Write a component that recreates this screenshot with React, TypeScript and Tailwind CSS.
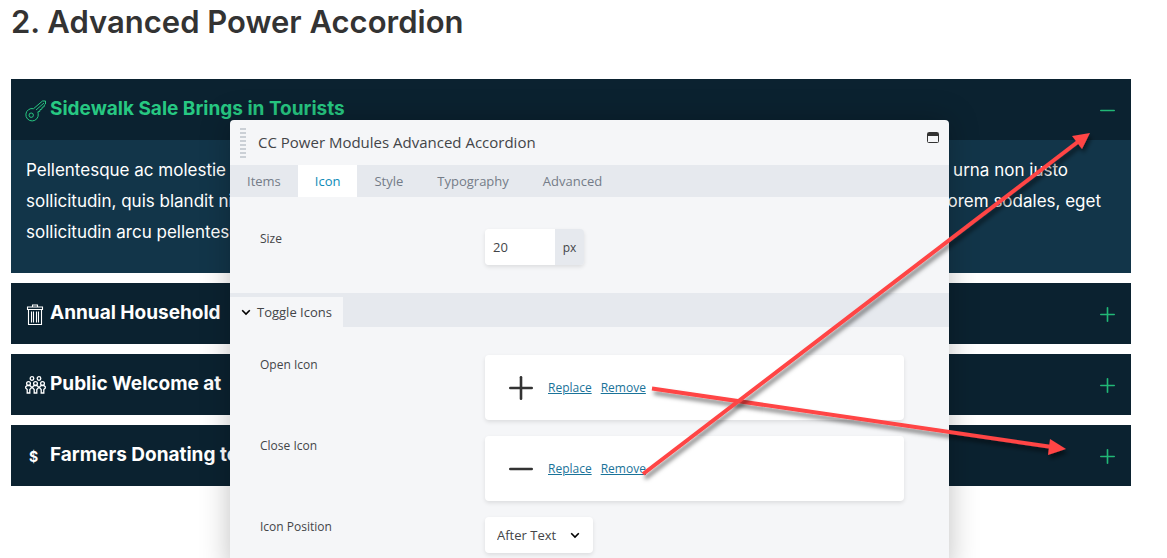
import React from 'react';

type IconProps = { className?: string };

function KeyIcon({ className }: IconProps) {
  return (
    <svg className={className} width="22" height="22" viewBox="0 0 22 22" fill="none" stroke="currentColor" strokeWidth="1" strokeLinejoin="round" aria-hidden="true">
      <path d="M8.500 8.700 17.500 1h3v3l-1.200 1-.2 1.800-1.900.4-.3 1.900-1.900.5-.2 1.800-1.900.4.3 2A6.200 6.200 0 1 1 8.500 8.700Z" />
      <circle cx="6.200" cy="15.200" r="2.200" />
      <path d="m11 10 8-7" />
    </svg>
  );
}

function TrashIcon({ className }: IconProps) {
  return (
    <svg className={className} width="22" height="22" viewBox="0 0 22 22" fill="none" stroke="currentColor" strokeWidth="1.100" aria-hidden="true">
      <path d="M7.500 2.500V1h5v1.500M2.500 5.500V3h15v2.500zM3.500 5.500v15h13v-15M6.500 7.500v11M8.500 7.500v11M11.500 7.500v11M13.500 7.500v11" />
    </svg>
  );
}

function CrowdIcon({ className }: IconProps) {
  return (
    <svg className={className} width="22" height="22" viewBox="0 0 22 22" fill="none" stroke="currentColor" strokeWidth="1.300" aria-hidden="true">
      <circle cx="7" cy="3.500" r="1.800" />
      <circle cx="14" cy="3.500" r="1.800" />
      <circle cx="3.500" cy="8.500" r="1.900" />
      <circle cx="10.500" cy="8.500" r="1.900" />
      <circle cx="17.500" cy="8.500" r="1.900" />
      <path d="M2.200 18v-3.500L.7 13v-1.200l1.500-1.300h2.600l1.500 1.300V13l-1.500 1.500V18zM9.200 18v-3.500L7.700 13v-1.200l1.500-1.300h2.600l1.500 1.300V13l-1.500 1.500V18zM16.200 18v-3.500L14.700 13v-1.200l1.500-1.300h2.600l1.500 1.300V13l-1.500 1.500V18z" />
    </svg>
  );
}

function ToggleGlyph({ open, className, size }: { open: boolean; className: string; size: number }) {
  return (
    <svg className={className} width={size} height={size} viewBox="0 0 24 24" fill="none" stroke="currentColor" strokeWidth="2.600" strokeLinecap="round" aria-hidden="true">
      <path d="M1.300 12h21.400" />
      {!open && <path d="M12 1.300v21.400" />}
    </svg>
  );
}

function Chevron({ className }: IconProps) {
  return (
    <svg className={className} width="10" height="7" viewBox="0 0 10 7" fill="none" stroke="currentColor" strokeWidth="1.600" aria-hidden="true">
      <path d="m1.200 1.200 3.800 3.800 3.800-3.800" />
    </svg>
  );
}

function ItemHeader({ title, icon, open = false }: { title: string; icon: React.ReactNode; open?: boolean }) {
  return (
    <button
      type="button"
      aria-expanded={open}
      className={`flex h-[61px] w-full items-center bg-[#0b2230] pb-px pl-[14px] pr-4 text-left font-[Inter,sans-serif] text-[19px] font-bold ${open ? 'text-[#27c882]' : 'text-white'}`}
    >
      <span className="mt-1 w-[25px] shrink-0">{icon}</span>
      <span className="grow truncate">{title}</span>
      <ToggleGlyph open={open} size={15} className="mt-[2px] text-[#21b876]" />
    </button>
  );
}

function IconField({ label, open }: { label: string; open: boolean }) {
  return (
    <div className="mb-4 flex" role="group" aria-label={label}>
      <span className="w-[225px] shrink-0 text-xs leading-5">{label}</span>
      <div className="flex h-[65px] grow items-center rounded bg-white pl-6 shadow-[0_2px_4px_rgba(0,0,0,0.1)]">
        <ToggleGlyph open={open} size={24} className="mr-[15px] text-[#333]" />
        <a href="#replace" className="mr-[9px] text-xs text-[#1a7399] underline">Replace</a>
        <a href="#remove" className="text-xs text-[#1a7399] underline">Remove</a>
      </div>
    </div>
  );
}

const tabs = ['Items', 'Icon', 'Style', 'Typography', 'Advanced'];

function SettingsPanel() {
  return (
    <section className="absolute left-[230px] top-[120px] w-[719px] rounded-t bg-[#f5f6f8] pb-5 font-['Open_Sans',sans-serif] text-[#434548] shadow-[0_0_30px_rgba(0,0,0,0.25)]">
      <header className="flex h-[45px] items-center pl-[10px] pr-[10px]">
        <div className="mr-3 flex flex-col gap-[2px]">
          {[0, 1, 2, 3, 4, 5, 6, 7].map((n) => (
            <span key={n} className="h-[2px] w-[6px] bg-[#cbd0d6]" />
          ))}
        </div>
        <h2 className="grow text-[15px]">CC Power Modules Advanced Accordion</h2>
        <button type="button" aria-label="Expand window" className="mb-[10px] text-[#333]">
          <svg width="12" height="11" viewBox="0 0 12 11" fill="none" aria-hidden="true">
            <rect x=".5" y=".5" width="11" height="10" rx="1" stroke="currentColor" />
            <path d="M1 1h10v3H1z" fill="currentColor" />
          </svg>
        </button>
      </header>
      <nav className="flex h-8 bg-[#e6e9ee] text-[13px]">
        {tabs.map((tab) => (
          <button
            key={tab}
            type="button"
            className={tab === 'Icon' ? 'bg-white px-[17px] pt-px text-[#0e8bb8]' : 'px-[17px] pt-px text-[#747c88]'}
          >
            {tab}
          </button>
        ))}
      </nav>
      <div className="flex h-24 pl-[30px] pt-8">
        <label htmlFor="icon-size" className="w-[225px] text-xs leading-5">Size</label>
        <div className="flex h-9 overflow-hidden rounded shadow-[0_2px_4px_rgba(0,0,0,0.1)]">
          <input id="icon-size" type="text" defaultValue="20" className="w-[70px] bg-white px-2 pt-[2px] text-[13px] outline-none" />
          <span className="flex w-[29px] items-center justify-center bg-[#e6e9ee] pt-px text-xs">px</span>
        </div>
      </div>
      <div className="flex bg-[#e6e9ee] pt-1">
        <button type="button" aria-expanded="true" className="flex h-[30px] items-center bg-[#f5f6f8] px-[11px] pt-px text-[13px]">
          <Chevron className="mr-[6px] text-black" />
          Toggle Icons
        </button>
      </div>
      <div className="pl-[30px] pr-[45px] pt-7">
        <IconField label="Open Icon" open={false} />
        <IconField label="Close Icon" open />
        <div className="flex">
          <label htmlFor="icon-position" className="w-[225px] text-xs leading-5">Icon Position</label>
          <div className="relative">
            <select id="icon-position" className="h-9 w-[108px] appearance-none rounded bg-white pl-3 pr-6 pt-[2px] text-[13px] shadow-[0_2px_4px_rgba(0,0,0,0.1)] outline-none">
              <option>After Text</option>
              <option>Before Text</option>
            </select>
            <Chevron className="pointer-events-none absolute right-[13px] top-[15px] text-black" />
          </div>
        </div>
      </div>
    </section>
  );
}

function Arrows() {
  return (
    <svg className="pointer-events-none absolute left-0 top-0" width="1167" height="558" viewBox="0 0 1167 558" aria-hidden="true">
      <defs>
        <filter id="arrow-shadow" x="-10%" y="-20%" width="120%" height="150%">
          <feDropShadow dx="2" dy="4" stdDeviation="2" floodColor="#000" floodOpacity="0.5" />
        </filter>
      </defs>
      <g filter="url(#arrow-shadow)" stroke="#ff4444" fill="#ff4444" strokeWidth="4">
        <path d="M652 388.500 1052 447" />
        <path d="m1066 449-16-10-2 16z" stroke="none" />
      </g>
      <g filter="url(#arrow-shadow)" stroke="#ff4444" fill="#ff4444" strokeWidth="4">
        <path d="m643 474 436-333" />
        <path d="m1090 133-18 3 10 13z" stroke="none" />
      </g>
    </svg>
  );
}

export default function App() {
  return (
    <main className="relative h-screen overflow-hidden bg-white pl-[11px] pr-9 font-[Inter,sans-serif]">
      <h1 className="mb-[35px] h-11 text-[31px] font-semibold leading-[44px] text-[#333]">2. Advanced Power Accordion</h1>
      <div className="flex flex-col gap-[10px]">
        <article>
          <ItemHeader open title="Sidewalk Sale Brings in Tourists" icon={<KeyIcon />} />
          <div className="h-[133px] bg-[#123549] px-[15px] pt-[15px] text-[17px] leading-[31px] text-white">
            <p className="flex justify-between pr-12"><span>Pellentesque ac molestie</span><span>urna non justo</span></p>
            <p className="flex justify-between pr-[15px]"><span>sollicitudin, quis blandit nisl</span><span>lorem sodales, eget</span></p>
            <p>sollicitudin arcu pellentesque</p>
          </div>
        </article>
        <ItemHeader title="Annual Household" icon={<TrashIcon />} />
        <ItemHeader title="Public Welcome at" icon={<CrowdIcon />} />
        <ItemHeader title="Farmers Donating to" icon={<span className="block pl-1 text-sm">$</span>} />
      </div>
      <SettingsPanel />
      <Arrows />
    </main>
  );
}
